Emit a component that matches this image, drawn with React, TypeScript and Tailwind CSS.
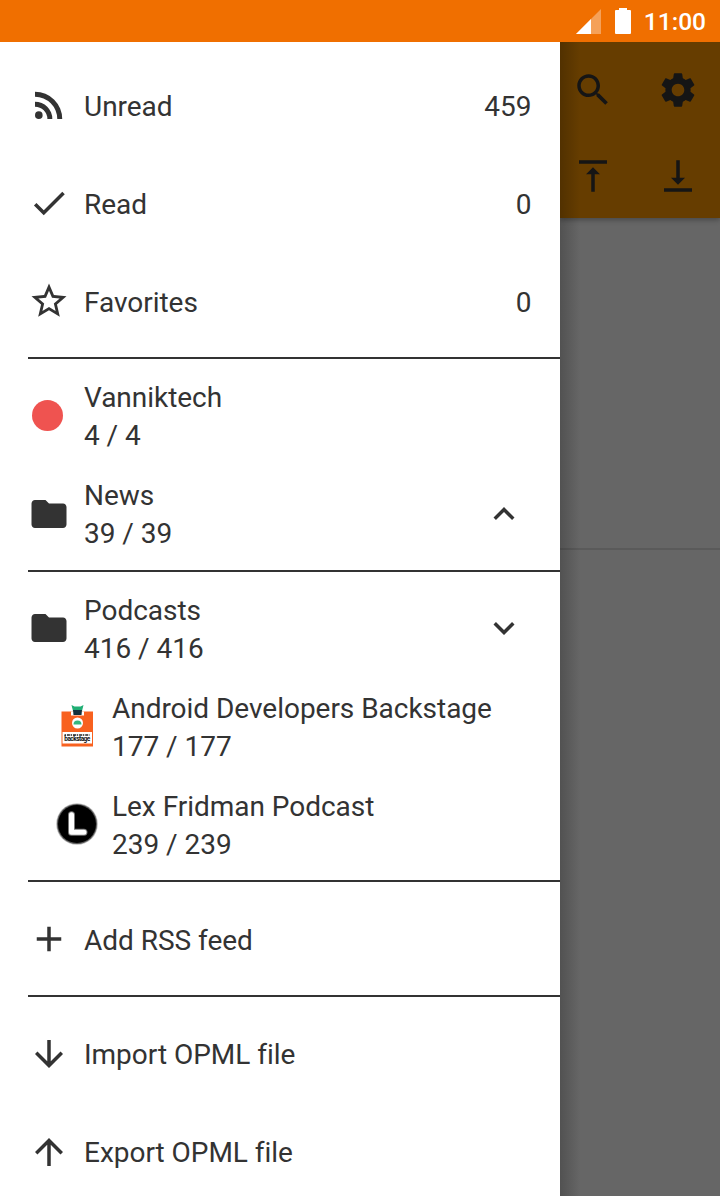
import type { ReactNode } from 'react';

const ICONS = {
  rss: 'M6.18 15.64a2.18 2.18 0 1 1 0 4.36 2.18 2.18 0 0 1 0-4.36zM4 4.44A15.56 15.56 0 0 1 19.56 20h-2.83A12.73 12.73 0 0 0 4 7.27V4.44zm0 5.66a9.9 9.9 0 0 1 9.9 9.9h-2.83A7.07 7.07 0 0 0 4 12.93V10.1z',
  check: 'M9 16.17L4.83 12l-1.42 1.41L9 19 21 7l-1.41-1.41z',
  star: 'M22 9.24l-7.19-.62L12 2 9.19 8.63 2 9.24l5.46 4.73L5.82 21 12 17.27 18.18 21l-1.63-7.03L22 9.24zM12 15.4l-3.76 2.27 1-4.28-3.32-2.88 4.38-.38L12 6.1l1.71 4.04 4.38.38-3.32 2.88 1 4.28L12 15.4z',
  folder: 'M10 4H4c-1.1 0-1.99.9-1.99 2L2 18c0 1.1.9 2 2 2h16c1.1 0 2-.9 2-2V8c0-1.1-.9-2-2-2h-8l-2-2z',
  up: 'M12 8l-6 6 1.41 1.41L12 10.83l4.59 4.58L18 14z',
  down: 'M16.59 8.59L12 13.17 7.41 8.59 6 10l6 6 6-6z',
  add: 'M19 13h-6v6h-2v-6H5v-2h6V5h2v6h6v2z',
  arrowDown: 'M20 12l-1.41-1.41L13 16.17V4h-2v12.17l-5.58-5.59L4 12l8 8 8-8z',
  arrowUp: 'M4 12l1.41 1.41L11 7.83V20h2V7.83l5.58 5.59L20 12l-8-8-8 8z',
  search: 'M15.5 14h-.79l-.28-.27C15.41 12.59 16 11.11 16 9.5 16 5.91 13.09 3 9.5 3S3 5.91 3 9.5 5.91 16 9.5 16c1.61 0 3.09-.59 4.23-1.57l.27.28v.79l5 4.99L20.49 19l-4.99-5zm-6 0C7.01 14 5 11.99 5 9.5S7.01 5 9.5 5 14 7.01 14 9.5 11.99 14 9.5 14z',
  settings:
    'M19.14 12.94c.04-.3.06-.61.06-.94 0-.32-.02-.64-.07-.94l2.03-1.58c.18-.14.23-.41.12-.61l-1.92-3.32c-.12-.22-.37-.29-.59-.22l-2.39.96c-.5-.38-1.03-.7-1.62-.94l-.36-2.54c-.04-.24-.24-.41-.48-.41h-3.84c-.24 0-.43.17-.47.41l-.36 2.54c-.59.24-1.13.57-1.62.94l-2.39-.96c-.22-.08-.47 0-.59.22L2.74 8.87c-.12.21-.08.47.12.61l2.03 1.58c-.05.3-.09.63-.09.94s.02.64.07.94l-2.03 1.58c-.18.14-.23.41-.12.61l1.92 3.32c.12.22.37.29.59.22l2.39-.96c.5.38 1.03.7 1.62.94l.36 2.54c.05.24.24.41.48.41h3.84c.24 0 .44-.17.47-.41l.36-2.54c.59-.24 1.13-.56 1.62-.94l2.39.96c.22.08.47 0 .59-.22l1.92-3.32c.12-.22.07-.47-.12-.61l-2.01-1.58zM12 15.6c-1.98 0-3.6-1.62-3.6-3.6s1.62-3.6 3.6-3.6 3.6 1.62 3.6 3.6-1.62 3.6-3.6 3.6z',
  alignTop: 'M8 11h3v10h2V11h3l-4-4-4 4zM4 3v2h16V3H4z',
  alignBottom: 'M16 13h-3V3h-2v10H8l4 4 4-4zM4 19v2h16v-2H4z',
};

function Icon({ name }: { name: keyof typeof ICONS }) {
  return (
    <svg viewBox="0 0 24 24" className="size-[42px] shrink-0" fill="currentColor">
      <path d={ICONS[name]} />
    </svg>
  );
}

function BackstageLogo() {
  return (
    <svg viewBox="0 0 42 42" className="size-[42px] shrink-0">
      <rect x="5.5" y="6.5" width="31.5" height="35" fill="#f8611f" />
      <path d="M15 6.5h13v4H15z" fill="#fff" />
      <path d="M15.5 0l3 1.5h6l3-1.500-1.500 6h-9z" fill="#1fae74" />
      <path d="M17 5h9l-.5 5h-8z" fill="#12303c" />
      <circle cx="21.5" cy="18" r="5.5" fill="#fff" />
      <path d="M17.5 19.5a4 4 0 0 1 8 0z" fill="#35b77f" />
      <rect x="6.5" y="27" width="29.5" height="11.5" fill="#fff" />
      <path d="M8.5 30h25" stroke="#222" strokeWidth="1.300" strokeDasharray="1.5 .9 3 .7" />
      <text
        x="21.3"
        y="36.3"
        textAnchor="middle"
        textLength="26"
        fontSize="6.5"
        fontWeight="700"
        fill="#111"
      >
        backstage
      </text>
    </svg>
  );
}

function LexLogo() {
  return (
    <svg viewBox="0 0 42 42" className="size-[42px] shrink-0">
      <circle cx="21" cy="21" r="20.8" fill="#bbb" />
      <circle cx="21" cy="21" r="20" fill="#555" />
      <circle cx="21" cy="21" r="19" fill="#000" />
      <path
        d="M15.5 11.8v17.4h12.500"
        fill="none"
        stroke="#777"
        strokeWidth="7"
        strokeLinecap="round"
        strokeLinejoin="round"
      />
      <path
        d="M15.5 11.8v17.4h12.500"
        fill="none"
        stroke="#fff"
        strokeWidth="5"
        strokeLinecap="round"
        strokeLinejoin="round"
      />
    </svg>
  );
}

interface RowProps {
  icon: ReactNode;
  title: string;
  subtitle?: string;
  count?: number;
  nested?: boolean;
  trailing?: ReactNode;
}

function Row({ icon, title, subtitle, count, nested, trailing }: RowProps) {
  return (
    <div className={`flex h-[98px] items-center gap-3.5 pr-7 ${nested ? 'pl-14' : 'pl-7'}`}>
      {icon}
      <div className="flex-1 pt-[3px] text-[28px] leading-[38px] tracking-[-0.03px]">
        <p>{title}</p>
        {subtitle && <p>{subtitle}</p>}
      </div>
      {count !== undefined && (
        <span className="pt-[3px] pr-[0.5px] text-[28px] leading-[38px]">{count}</span>
      )}
      {trailing && <div className="pr-[7px]">{trailing}</div>}
    </div>
  );
}

function Divider() {
  return <hr className="mt-[7px] mb-[7.7px] ml-7 h-[2px] border-0 bg-[#333]" />;
}

function StatusBar() {
  return (
    <header className="flex h-[42px] items-center justify-end bg-[#f06f00] pr-3.5 text-white">
      <svg viewBox="0 0 25 25" className="mr-3.5 size-[25px]">
        <path d="M25 0v25H0z" fill="#fff" fillOpacity=".35" />
        <path d="M15 10v15H0z" fill="#fff" />
      </svg>
      <svg viewBox="0 0 16 26" className="mr-[13px] h-[26px] w-4" fill="currentColor">
        <path d="M4 0h8v2h3a1 1 0 0 1 1 1v22a1 1 0 0 1-1 1H1a1 1 0 0 1-1-1V3a1 1 0 0 1 1-1h3z" />
      </svg>
      <span className="pt-[2px] text-[24.5px] leading-none font-medium">11:00</span>
    </header>
  );
}

function Drawer() {
  return (
    <nav className="w-[560px] shrink-0 bg-white pt-3.5">
      <Row icon={<Icon name="rss" />} title="Unread" count={459} />
      <Row icon={<Icon name="check" />} title="Read" count={0} />
      <Row icon={<Icon name="star" />} title="Favorites" count={0} />
      <Divider />
      <Row
        icon={
          <div className="flex size-[42px] items-center pl-1">
            <div className="size-[31px] rounded-full bg-[#ef5350]" />
          </div>
        }
        title="Vanniktech"
        subtitle="4 / 4"
      />
      <Row
        icon={<Icon name="folder" />}
        title="News"
        subtitle="39 / 39"
        trailing={<Icon name="up" />}
      />
      <Divider />
      <Row
        icon={<Icon name="folder" />}
        title="Podcasts"
        subtitle="416 / 416"
        trailing={<Icon name="down" />}
      />
      <Row icon={<BackstageLogo />} title="Android Developers Backstage" subtitle="177 / 177" nested />
      <Row icon={<LexLogo />} title="Lex Fridman Podcast" subtitle="239 / 239" nested />
      <Divider />
      <Row icon={<Icon name="add" />} title="Add RSS feed" />
      <Divider />
      <Row icon={<Icon name="arrowDown" />} title="Import OPML file" />
      <Row icon={<Icon name="arrowUp" />} title="Export OPML file" />
    </nav>
  );
}

function DimmedContent() {
  return (
    <main className="relative flex flex-1 flex-col overflow-hidden bg-[#666] text-[#151515]">
      <div className="flex h-44 flex-col gap-11 bg-[#663d00] pt-[27px] pr-[21px] pl-3 shadow-[0_2px_5px_rgba(0,0,0,0.3)]">
        <div className="flex justify-between">
          <Icon name="search" />
          <Icon name="settings" />
        </div>
        <div className="flex justify-between">
          <Icon name="alignTop" />
          <Icon name="alignBottom" />
        </div>
      </div>
      <div className="box-content h-[330px] border-b-2 border-[#5a5a5a]" />
      <div className="absolute inset-y-0 left-0 w-5 bg-gradient-to-r from-black/20 to-transparent" />
    </main>
  );
}

export default function App() {
  return (
    <div className="flex h-[1196px] w-[720px] flex-col overflow-hidden font-[Roboto,sans-serif] text-[#333]">
      <StatusBar />
      <div className="flex min-h-0 flex-1">
        <Drawer />
        <DimmedContent />
      </div>
    </div>
  );
}
